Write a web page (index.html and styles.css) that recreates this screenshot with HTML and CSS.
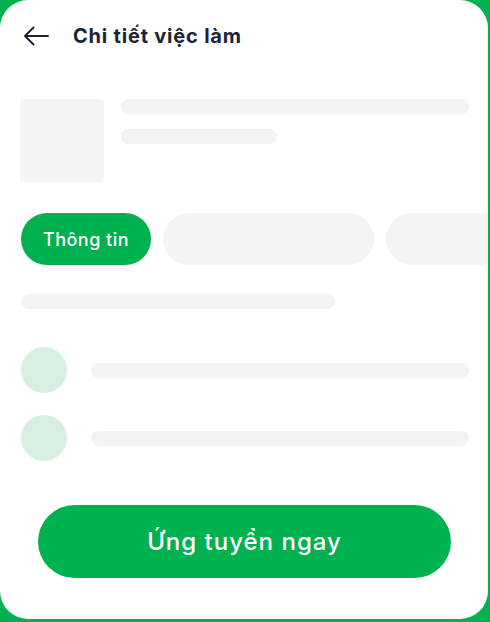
FILE: index.html
```html
<!DOCTYPE html>
<html lang="vi">
<head>
<meta charset="utf-8">
<title>Chi tiết việc làm</title>
<link rel="stylesheet" href="styles.css">
</head>
<body>
<div class="card">
  <header class="topbar">
    <svg class="back" width="26" height="20" viewBox="0 0 26 20" aria-hidden="true">
      <path d="M25 10H2M10.5 1.5L2 10l8.5 8.5" fill="none" stroke="#1b2434" stroke-width="2" stroke-linecap="round" stroke-linejoin="round"/>
    </svg>
    <h1 class="title">Chi tiết việc làm</h1>
  </header>

  <section class="company">
    <div class="sk-logo"></div>
    <div class="company-lines">
      <div class="sk-line w-full"></div>
      <div class="sk-line w-short"></div>
    </div>
  </section>

  <nav class="tabs">
    <div class="tab active">Thông tin</div>
    <div class="tab sk-tab wide"></div>
    <div class="tab sk-tab narrow"></div>
  </nav>

  <div class="sk-line section-line"></div>

  <div class="rows">
    <div class="row"><div class="dot"></div><div class="sk-line row-line"></div></div>
    <div class="row"><div class="dot"></div><div class="sk-line row-line"></div></div>
  </div>

  <div class="cta-wrap">
    <button class="cta">Ứng tuyển ngay</button>
  </div>
</div>
</body>
</html>
```

FILE: styles.css
```css
* { box-sizing: border-box; }
html, body { margin: 0; padding: 0; }
body {
  width: 490px;
  height: 622px;
  background: #00b14f;
  font-family: Inter, "Noto Sans", sans-serif;
  overflow: hidden;
}
.card {
  width: 488px;
  height: 619px;
  background: #fff;
  border-radius: 28px;
  overflow: hidden;
  display: flex;
  flex-direction: column;
}
.topbar {
  display: flex;
  align-items: center;
  height: 36px;
  margin-top: 18px;
  padding-left: 23px;
}
.back { flex: none; }
.title {
  margin: 0 0 0 24px;
  font-size: 20px;
  font-weight: 700;
  letter-spacing: 0.8px;
  color: #1b2434;
}
.company {
  display: flex;
  margin-top: 45px;
  padding-left: 20px;
}
.sk-logo {
  width: 84px;
  height: 83px;
  background: #f4f4f4;
  border-radius: 4px;
}
.company-lines {
  display: flex;
  flex-direction: column;
  gap: 15px;
  margin-left: 17px;
}
.sk-line {
  height: 15px;
  background: #f3f3f3;
  border-radius: 8px;
}
.w-full { width: 348px; }
.w-short { width: 156px; }
.tabs {
  display: flex;
  gap: 12px;
  margin-top: 31px;
  padding-left: 21px;
  height: 52px;
}
.tab {
  flex: none;
  border-radius: 26px;
  height: 52px;
}
.tab.active {
  width: 130px;
  background: #00b14f;
  color: #fff;
  font-size: 18px;
  font-weight: 500;
  letter-spacing: 0.5px;
  display: flex;
  align-items: center;
  justify-content: center;
}
.sk-tab { background: #f4f4f4; }
.wide { width: 211px; }
.narrow { width: 120px; }
.section-line {
  width: 314px;
  margin: 29px 0 0 21px;
}
.rows {
  display: flex;
  flex-direction: column;
  gap: 22px;
  margin-top: 38px;
  padding-left: 21px;
}
.row {
  display: flex;
  align-items: center;
}
.dot {
  width: 46px;
  height: 46px;
  border-radius: 50%;
  background: #d6efe1;
  flex: none;
}
.row-line {
  width: 378px;
  margin-left: 24px;
}
.cta-wrap {
  margin-top: 44px;
  padding-left: 38px;
}
.cta {
  width: 413px;
  height: 73px;
  border: none;
  border-radius: 37px;
  background: #00b14f;
  color: #fff;
  font-family: Inter, "Noto Sans", sans-serif;
  font-size: 24px;
  font-weight: 500;
  letter-spacing: 1px;
  cursor: pointer;
  padding: 0;
}
```
